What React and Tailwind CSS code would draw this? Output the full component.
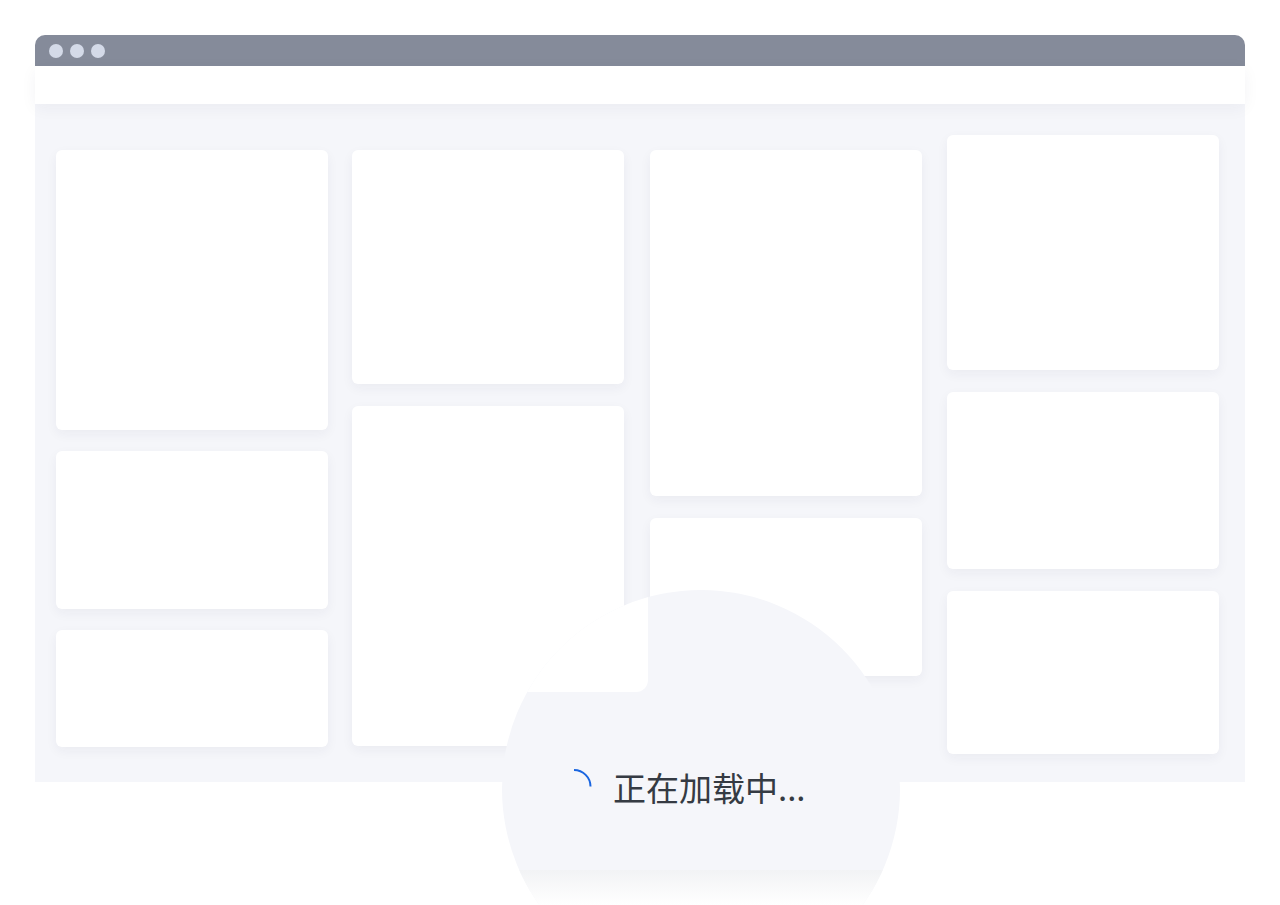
const columns = [
  { className: "pt-[46px]", cards: ["h-[280px]", "h-[158px]", "h-[117px]"] },
  { className: "pt-[46px] ml-[24px] gap-[22px]", cards: ["h-[234px]", "h-[340px]"] },
  { className: "pt-[46px] ml-[26px] gap-[22px]", cards: ["h-[346px]", "h-[158px]"] },
  { className: "pt-[31px] ml-[25px] gap-[22px]", cards: ["h-[235px]", "h-[177px]", "h-[163px]"] },
];

function Spinner() {
  return (
    <svg width="20" height="20" viewBox="0 0 20 20" fill="none" className="shrink-0 -translate-y-[8px]">
      <path d="M2 1 A 16.5 16.5 0 0 1 18.5 17.5" stroke="#1a66e0" strokeWidth="2" />
    </svg>
  );
}

export default function App() {
  return (
    <div className="relative h-[905px] overflow-hidden bg-white font-['Noto_Sans_CJK_SC','Noto_Sans',sans-serif]">
      {/* Browser window */}
      <div className="mx-[35px] pt-[35px]">
        <div className="flex h-[31px] items-center gap-[7px] rounded-t-[10px] bg-[#858b9a] px-[14px]">
          <span className="h-[14px] w-[14px] rounded-full bg-[#d4dae8]" />
          <span className="h-[14px] w-[14px] rounded-full bg-[#d4dae8]" />
          <span className="h-[14px] w-[14px] rounded-full bg-[#d4dae8]" />
        </div>
        <div className="relative z-10 h-[38px] bg-white shadow-[0_4px_16px_rgba(30,40,70,0.05)]" />
        <div className="flex h-[678px] items-start bg-[#f5f6fa] px-[21px]">
          {columns.map((col, i) => (
            <div key={i} className={`flex w-[272px] flex-col gap-[21px] ${col.className}`}>
              {col.cards.map((h, j) => (
                <div key={j} className={`${h} rounded-[6px] bg-white shadow-[0_4px_12px_rgba(30,40,70,0.05)]`} />
              ))}
            </div>
          ))}
        </div>
      </div>

      {/* Loading bubble */}
      <div className="absolute left-[502px] top-[590px] h-[398px] w-[398px] overflow-hidden rounded-full bg-[#f5f6fa]">
        <div className="absolute left-0 top-0 h-[102px] w-[146px] rounded-br-[12px] bg-white" />
        <div className="absolute inset-x-0 bottom-0 top-[280px] bg-gradient-to-b from-[#f2f3f5] to-white to-[30%]" />
        <div className="relative ml-[70px] mt-[177px] flex h-[40px] items-center gap-[21px]">
          <Spinner />
          <span className="text-[33px] leading-[40px] text-[#353b43]">正在加载中...</span>
        </div>
      </div>
    </div>
  );
}
